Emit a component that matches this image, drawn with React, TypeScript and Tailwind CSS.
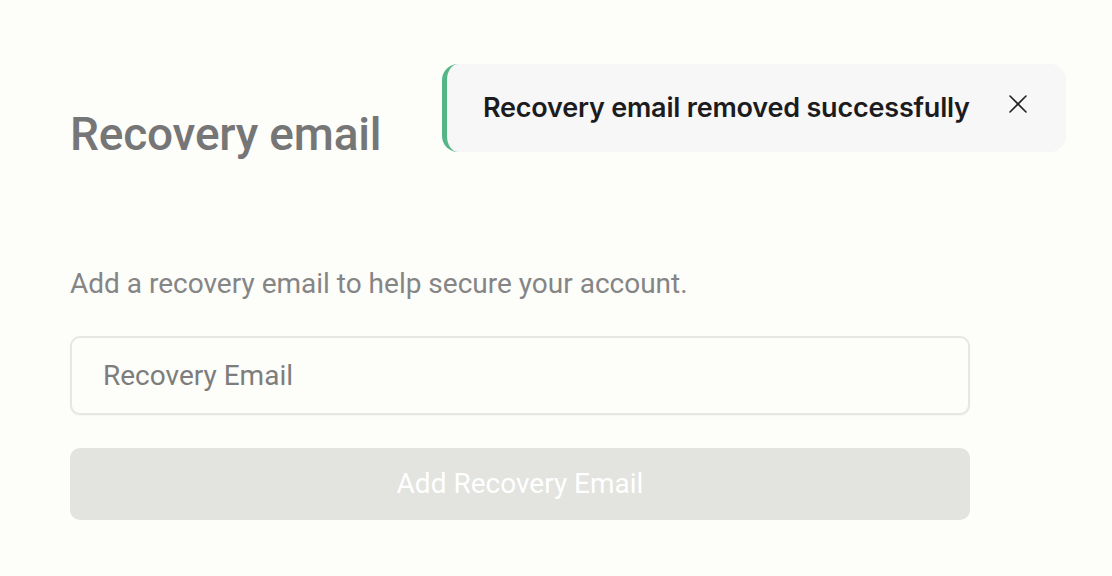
import { X } from "lucide-react";

export default function App() {
  return (
    <div
      className="relative w-full min-h-[576px] bg-[#fdfdfa] overflow-hidden"
      style={{ fontFamily: "Roboto, 'Liberation Sans', sans-serif" }}
    >
      <div className="ml-[70px] pt-[104px] w-[900px]">
        <h1 className="text-[46px] font-medium leading-[60px] text-[#767676] tracking-[-0.2px]">
          Recovery email
        </h1>

        <p className="mt-[104px] text-[28px] leading-[32px] text-[#858585]">
          Add a recovery email to help secure your account.
        </p>

        <input
          type="email"
          placeholder="Recovery Email"
          className="mt-[36px] block w-full h-[79px] rounded-[10px] border-2 border-[#e6e6e2] bg-[#fdfdfa] px-[31px] text-[28px] text-[#333] placeholder:text-[#7d7d7d] outline-none shadow-[0_1px_2px_rgba(0,0,0,0.04)]"
        />

        <button
          disabled
          className="mt-[33px] block w-full h-[72px] rounded-[10px] bg-[#e3e3df] text-[28px] text-white"
        >
          Add Recovery Email
        </button>
      </div>

      {/* toast */}
      <div className="absolute top-[64px] left-[442px] w-[624px] h-[88px] flex items-center rounded-[16px] bg-[#f7f7f7] border-l-[5px] border-[#55b685] pl-[36px] pr-[32px]">
        <p
          className="flex-1 text-[27px] font-semibold text-[#1c1c1e] tracking-[-0.2px]"
          style={{ fontFamily: "Inter, 'Liberation Sans', sans-serif" }}
        >
          Recovery email removed successfully
        </p>
        <X className="w-[32px] h-[32px] text-[#222] -mt-[8px]" strokeWidth={1.2} />
      </div>
    </div>
  );
}
